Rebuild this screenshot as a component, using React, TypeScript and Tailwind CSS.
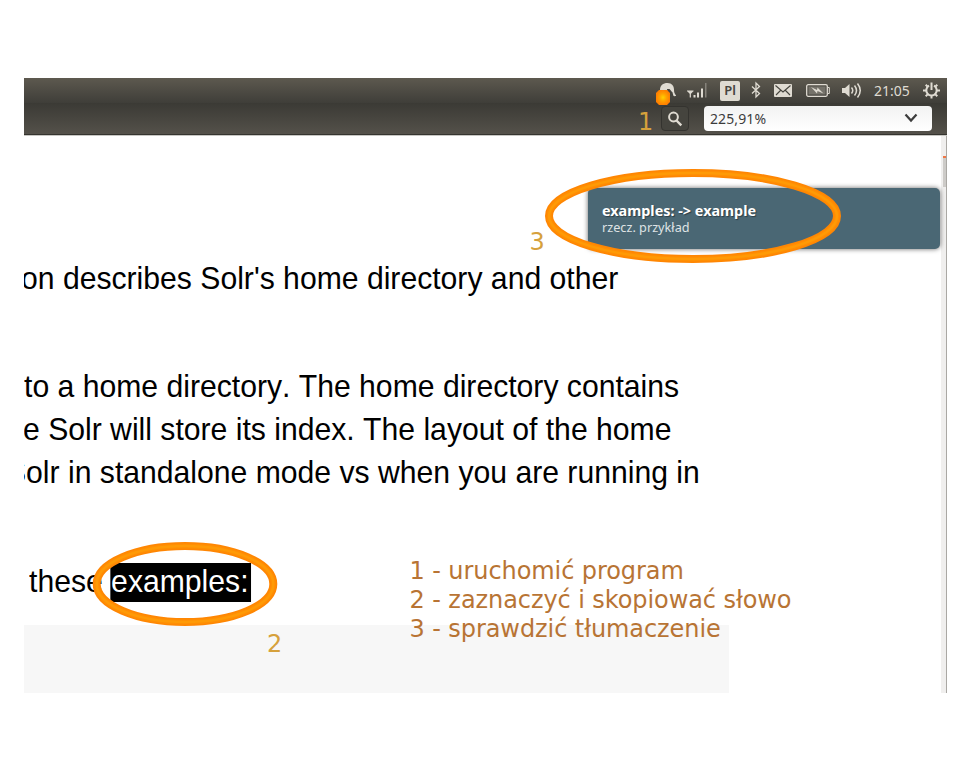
import React from "react";

const ink = "#dfdbd2";

function Indicators() {
  return (
    <div className="flex h-[25px] items-center pl-[636px] bg-linear-to-b from-[#5d594f] to-[#3f3e39]">
      <svg className="mr-[11px] h-[25px] w-[16px] shrink-0" viewBox="0 0 16 25">
        <path d="M0 12C0 7.500 3 5 7.500 5S14 8 14 11.500c0 2.500.5 4.500 2.500 6.500-2.500.5-4 0-5.500-1H4z" fill={ink} />
        <path d="M7 11h2.500l3 3.500 1 3.500H8z" fill="#45443e" />
      </svg>
      <svg className="mr-[13px] h-[25px] w-[20px] shrink-0" viewBox="0 0 20 25">
        <path d="M0 13h6.500M1 13l2.300 2.500L5.600 13M3.300 13v6.500" fill="none" stroke={ink} strokeWidth="1.200" />
        <path d="M6.500 17h2v2.500h-2zM10 14.500h2v5h-2zM14 10.500h2v9h-2z" fill={ink} />
        <path d="M18 5h1.500v14.500H18z" fill="#85827a" />
      </svg>
      <div className="mr-[11px] flex h-[20px] w-[20px] shrink-0 items-center justify-center rounded-[2px] bg-[#dfdbd2] font-['Noto_Sans',sans-serif] text-[13px] font-semibold text-[#45443e]">
        Pl
      </div>
      <svg className="mr-[13px] h-[25px] w-[10px] shrink-0" viewBox="0 0 10 25">
        <path d="M1 8.500l7.500 7L5 19V5l3.500 3.500-7.500 7" fill="none" stroke={ink} strokeWidth="1.300" />
      </svg>
      <svg className="mr-[14px] h-[25px] w-[18px] shrink-0" viewBox="0 0 18 25">
        <rect y="6" width="18" height="13" rx="1" fill={ink} />
        <path d="M1.500 7.500L9 14l7.500-6.500M2 17l4.500-4.500M16 17l-4.500-4.500" fill="none" stroke="#45443e" strokeWidth="1.100" />
      </svg>
      <svg className="mr-[11px] h-[25px] w-[24px] shrink-0" viewBox="0 0 24 25">
        <rect x=".7" y="6.700" width="20.600" height="11.600" rx="1.500" fill="none" stroke={ink} strokeWidth="1.300" />
        <rect x="2.500" y="8.500" width="17" height="8" fill="#75726a" />
        <path d="M22 9.500h1.300v6H22" fill="none" stroke={ink} />
        <path d="M5 9l6 3 .5-2.500 6 6-6-2.500-.5 2.500z" fill={ink} />
      </svg>
      <svg className="mr-[12px] h-[25px] w-[21px] shrink-0" viewBox="0 0 21 25">
        <path d="M1 10h3l4.500-4v13L4 15H1z" fill={ink} />
        <path d="M10.500 9.500q2.500 3 0 6M13.500 7.500q4 5 0 10M16.500 5.500q5.500 7 0 14" fill="none" stroke={ink} strokeWidth="1.500" />
      </svg>
      <span className="mr-[12px] w-[37px] shrink-0 whitespace-nowrap font-['Noto_Sans',sans-serif] text-[14px] leading-[24px] text-[#dfdbd2]">
        21:05
      </span>
      <svg className="h-[25px] w-[17px] shrink-0" viewBox="0 0 17 25" fill="none" stroke={ink}>
        <path d="M6 7.700a5.200 5.200 0 1 0 5 0M8.500 4.500v7.500" strokeWidth="2" />
        <path d="M0 12.500h3.500M13.500 12.500H17M8.500 17v3.500M2.700 6.700l2.200 2.200M14.300 6.700l-2.200 2.200M2.700 18.300l2.200-2.200M14.300 18.300l-2.200-2.200" strokeWidth="2" />
      </svg>
    </div>
  );
}

function Toolbar() {
  return (
    <div className="flex h-[32px] items-start border-b border-[#35342f] bg-linear-to-b from-[#3b3a35] to-[#54514a] pl-[637px] pt-[3px]">
      <div className="mr-[15px] flex h-[25px] w-[28px] shrink-0 items-center justify-center rounded-[4px] border border-[#34332f] bg-[#45443e]">
        <svg className="h-[16px] w-[16px]" viewBox="0 0 16 16" fill="none" stroke={ink}>
          <circle cx="6.500" cy="6" r="4.400" strokeWidth="2" />
          <path d="M9.500 9.500l4.800 4.800" strokeWidth="2.400" />
        </svg>
      </div>
      <div className="flex h-[25px] w-[228px] shrink-0 items-center justify-between rounded-[4px] bg-linear-to-b from-[#f2f2f2] to-white pl-[6px] pr-[14px]">
        <span className="font-['Noto_Sans',sans-serif] text-[14px] leading-[25px] tracking-[0.1px] text-[#3c3c3c]">225,91%</span>
        <svg className="h-[12px] w-[14px]" viewBox="0 0 14 12">
          <path d="M1.500 1.500L7 7.500l5.500-6" fill="none" stroke="#3c3c3c" strokeWidth="2.200" />
        </svg>
      </div>
    </div>
  );
}

function Page() {
  return (
    <div className="h-[557px] w-[917px] whitespace-pre bg-white pt-[121px] font-['Liberation_Sans',Arial,sans-serif] text-[31.500px] leading-[43px] text-black [font-kerning:none]">
      <p className="ml-[-3px] origin-left scale-x-[0.957]">on describes Solr's home directory and other</p>
      <p className="mt-[65px] ml-[0.400px] origin-left scale-x-[0.957]">to a home directory. The home directory contains</p>
      <p className="ml-[-1.500px] origin-left scale-x-[0.957]">e Solr will store its index. The layout of the home</p>
      <p className="ml-[-17.900px] origin-left scale-x-[0.957]">Solr in standalone mode vs when you are running in</p>
      <p className="mt-[66px] ml-[4.600px] flex origin-left scale-x-[0.957]">
        <span>these </span>
        <span className="mt-[3px] ml-[-1px] h-[39px] bg-black pr-[3px] pl-[1px] leading-[37px] text-white">examples:</span>
      </p>
      <div className="mt-[22px] h-[68px] w-[705px] bg-[#f7f7f7]" />
    </div>
  );
}

function Ring({ cx, cy, rx, ry }: { cx: number; cy: number; rx: number; ry: number }) {
  return (
    <g fill="none">
      <ellipse cx={cx} cy={cy} rx={rx} ry={ry} stroke="#ff8603" strokeWidth="8" />
      <ellipse cx={cx} cy={cy} rx={rx} ry={ry} stroke="#ff8e04" strokeWidth="5" />
      <ellipse cx={cx} cy={cy} rx={rx} ry={ry} stroke="#ff9a06" strokeWidth="2.500" />
    </g>
  );
}

export default function App() {
  return (
    <main className="relative h-[771px] w-[972px] overflow-hidden bg-white pt-[78px] pl-[24px]">
      <div className="h-[615px] w-[923px] overflow-hidden">
        <Indicators />
        <Toolbar />
        <div className="flex h-[558px] border-t border-[#c8c7c3]">
          <Page />
          <div className="w-[6px] shrink-0 border-r border-[#aaa8a4] bg-[#f0efee] pt-[20px] pl-[2px]">
            <div className="h-[31px] border-t-2 border-[#f07746] bg-[#cdcbc8]" />
          </div>
        </div>
      </div>

      <div className="absolute top-[188px] left-[588px] h-[61px] w-[352px] rounded-[5px] bg-[#4a6774] pt-[15px] pl-[14px] font-['Noto_Sans',sans-serif] shadow-[0_0_5px_rgba(0,0,0,0.6)]">
        <p className="whitespace-nowrap text-[14.400px] leading-[16px] font-bold text-white [text-shadow:1px_1px_1px_rgba(0,0,0,0.4)]">examples: -&gt; example</p>
        <p className="whitespace-nowrap text-[12.700px] leading-[16px] text-[#dfe3e5]">rzecz. przykład</p>
      </div>

      <svg className="absolute inset-0 h-[771px] w-[972px]" viewBox="0 0 972 771">
        <defs>
          <radialGradient id="dot">
            <stop offset="0" stopColor="#ffd000" />
            <stop offset=".5" stopColor="#ffa000" />
            <stop offset="1" stopColor="#ff7f00" />
          </radialGradient>
        </defs>
        <path d="M659 90h8l3 3v9l-3 3h-8l-3-3v-9z" fill="url(#dot)" />
        <Ring cx={693} cy={216} rx={144} ry={43} />
        <Ring cx={185} cy={584} rx={88.300} ry={38} />
      </svg>

      <div className="font-['DejaVu_Sans',sans-serif] text-[24px] leading-[29px] text-[#d6a13c]">
        <span className="absolute top-[108px] left-[638px]">1</span>
        <span className="absolute top-[228px] left-[529.500px]">3</span>
        <span className="absolute top-[630px] left-[267px]">2</span>
        <div className="absolute top-[557px] left-[409.500px] tracking-[-0.080px] whitespace-nowrap text-[#b87434]">
          <p>1 - uruchomić program</p>
          <p>2 - zaznaczyć i skopiować słowo</p>
          <p>3 - sprawdzić tłumaczenie</p>
        </div>
      </div>
    </main>
  );
}
